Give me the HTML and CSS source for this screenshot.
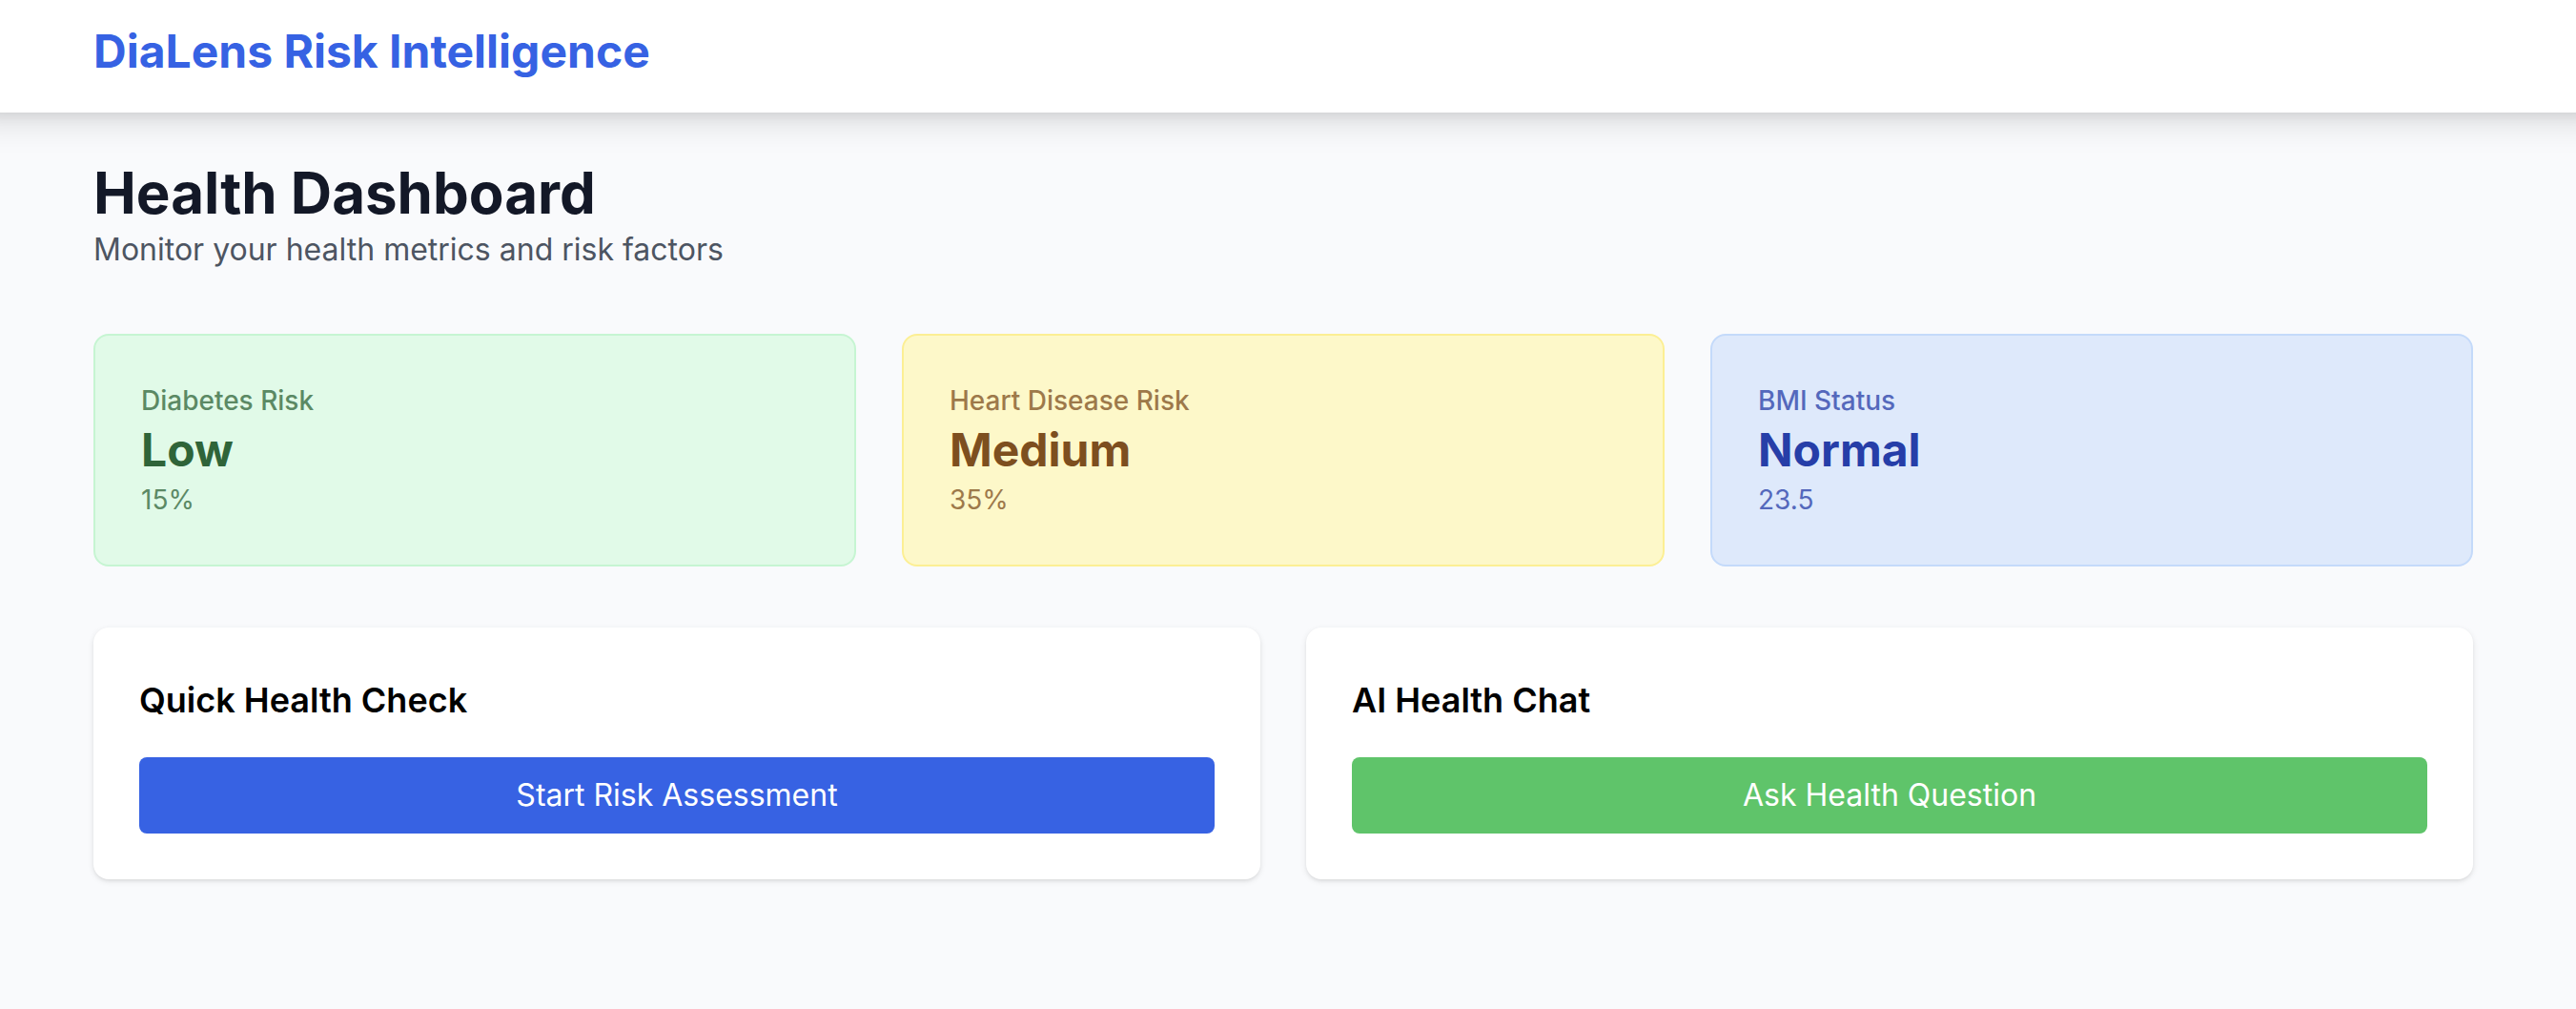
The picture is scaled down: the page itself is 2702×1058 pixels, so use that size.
FILE: index.html
```html
<!DOCTYPE html>
<html lang="en">
<head>
<meta charset="utf-8">
<meta name="viewport" content="width=device-width, initial-scale=1">
<title>DiaLens Risk Intelligence</title>
<link rel="stylesheet" href="styles.css">
</head>
<body>
<header class="topbar"><a class="brand" href="#">DiaLens Risk Intelligence</a></header>
<main class="dashboard">
  <div class="intro">
    <h1 class="title">Health Dashboard</h1>
    <p class="subtitle">Monitor your health metrics and risk factors</p>
  </div>
  <section class="metrics" aria-label="Health metrics">
    <article class="metric metric-green">
      <h2 class="metric-label">Diabetes Risk</h2>
      <p class="metric-value">Low</p>
      <p class="metric-detail">15%</p>
    </article>
    <article class="metric metric-yellow">
      <h2 class="metric-label">Heart Disease Risk</h2>
      <p class="metric-value">Medium</p>
      <p class="metric-detail">35%</p>
    </article>
    <article class="metric metric-blue">
      <h2 class="metric-label">BMI Status</h2>
      <p class="metric-value">Normal</p>
      <p class="metric-detail">23.5</p>
    </article>
  </section>
  <section class="actions" aria-label="Actions">
    <article class="panel">
      <h2 class="panel-title">Quick Health Check</h2>
      <button class="button button-blue" type="button">Start Risk Assessment</button>
    </article>
    <article class="panel">
      <h2 class="panel-title">AI Health Chat</h2>
      <button class="button button-green" type="button">Ask Health Question</button>
    </article>
  </section>
</main>
</body>
</html>
```
FILE: styles.css
```css
* { box-sizing: border-box; margin: 0; }
body { background: #f9fafc; color: #000; font-family: Inter, "Liberation Sans", sans-serif; }
.topbar { padding: 22px 98px 32px; background: #fff; box-shadow: 0 -16px 30px 30px rgb(0 0 0 / 10%), 0 -8px 12px 12px rgb(0 0 0 / 8%); }
.brand { display: block; color: #3662e3; font-size: 48px; font-weight: 700; line-height: 64px; text-decoration: none; }
.dashboard { padding: 48px 108px 136px 98px; }
.intro { margin-bottom: 64px; }
.title { color: #131827; font-size: 60px; font-weight: 700; line-height: 72px; }
.subtitle { color: #4d5562; font-size: 32px; line-height: 48px; }
.metrics { display: grid; grid-template-columns: repeat(3, 1fr); gap: 48px; margin-bottom: 64px; }
.metric { padding: 48px; border: 2px solid; border-radius: 16px; }
.metric-green { background: #e1fae8; border-color: #c6f5d2; color: #2f6439; }
.metric-yellow { background: #fdf8c9; border-color: #fcef94; color: #7d4f1f; }
.metric-blue { background: #dee9fb; border-color: #c4dafa; color: #263ea8; }
.metric-label { font-size: 28px; font-weight: 500; line-height: 40px; opacity: .75; }
.metric-value { font-size: 48px; font-weight: 700; line-height: 64px; }
.metric-detail { font-size: 28px; line-height: 40px; opacity: .75; }
.actions { display: grid; grid-template-columns: repeat(2, 1fr); gap: 48px; }
.panel { padding: 48px; border-radius: 16px; background: #fff; box-shadow: 0 2px 6px rgb(0 0 0 / 10%), 0 2px 4px -2px rgb(0 0 0 / 10%); }
.panel-title { margin-bottom: 32px; font-size: 36px; font-weight: 600; line-height: 56px; }
.button { display: block; width: 100%; padding: 16px 32px; border: 0; border-radius: 8px; color: #fff; font: inherit; font-size: 32px; line-height: 48px; cursor: pointer; }
.button-blue { background: #3762e3; }
.button-green { background: #5fc46a; }
```
